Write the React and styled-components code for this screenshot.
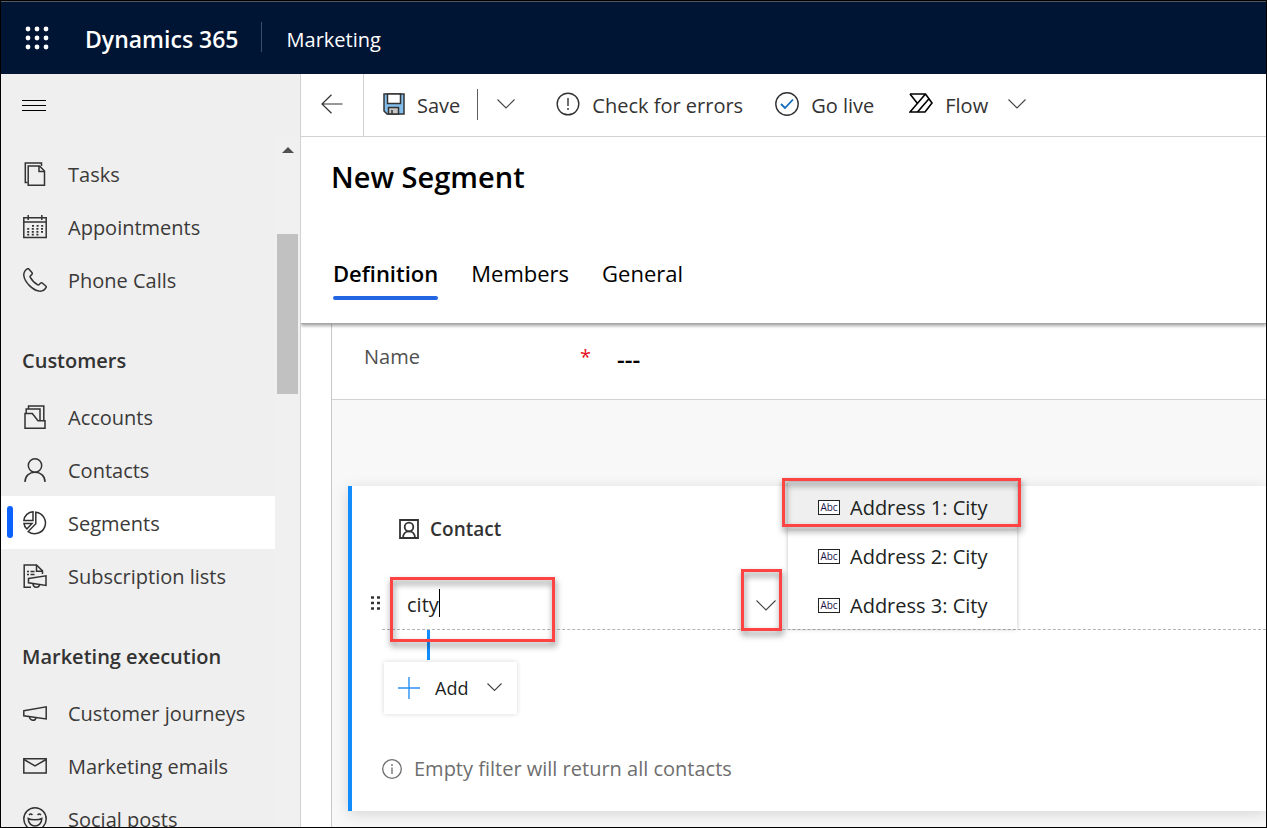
import React, { useState } from "react";
import styled, { createGlobalStyle, css } from "styled-components";

const GlobalStyle = createGlobalStyle`
  *, *::before, *::after { box-sizing: border-box; }
  body {
    margin: 0;
    background: #fff;
    color: #333;
    font-family: "Open Sans", "Noto Sans", sans-serif;
    font-size: 20px;
    line-height: 28px;
  }
  button, input { font: inherit; color: inherit; }
  button { background: none; border: 0; padding: 0; cursor: pointer; }
  a { color: inherit; text-decoration: none; }
  svg { display: block; flex: none; }
`;

const Shell = styled.div`
  display: flex;
  flex-direction: column;
  height: 100vh;
  overflow: hidden;
  border: 1px solid #000;
`;

const TopBar = styled.header`
  display: flex;
  align-items: center;
  flex: none;
  height: 73px;
  padding: 0 24px;
  border-top: 1px solid #55585f;
  background: #001433;
  color: #fff;
`;

const Brand = styled.a`
  margin-left: 36px;
  padding-top: 2px;
  font-size: 23px;
  font-weight: 600;
`;

const TopDivider = styled.span`
  width: 1px;
  height: 30px;
  margin: 0 25px 2px 22px;
  background: #3f4d66;
`;

const AppName = styled.span`
  padding-top: 3px;
`;

const Columns = styled.div`
  display: flex;
  flex: 1;
  min-height: 0;
`;

const Sidebar = styled.nav`
  display: flex;
  flex-direction: column;
  flex: none;
  width: 300px;
  border-right: 1px solid #d2d2d2;
  background: #efefef;
`;

const MenuToggle = styled.button`
  display: flex;
  align-items: center;
  flex: none;
  height: 63px;
  padding: 0 0 2px 21px;
`;

const SidebarBody = styled.div`
  display: flex;
  flex: 1;
  min-height: 0;
`;

const NavScroll = styled.div`
  flex: 1;
  overflow: hidden;
  padding-top: 10px;
`;

const NavHeading = styled.h2`
  margin: 0;
  padding: 41px 0 15px 21px;
  font-size: 20px;
  line-height: 28px;
  font-weight: 600;
`;

const NavList = styled.ul`
  margin: 0;
  padding: 0;
  list-style: none;
`;

const NavLink = styled.a`
  display: flex;
  align-items: center;
  position: relative;
  height: 53px;
  padding-left: 22px;
  gap: 21px;
  color: #3b3a39;
  ${(p) =>
    p.$active &&
    css`
      background: #fff;
      &::before {
        content: "";
        position: absolute;
        left: 6px;
        top: 10px;
        width: 6px;
        height: 32px;
        border-radius: 3px;
        background: #0b62ff;
      }
    `}
`;

const NavText = styled.span`
  padding-top: 3px;
`;

const ScrollTrack = styled.div`
  display: flex;
  flex-direction: column;
  align-items: center;
  flex: none;
  width: 25px;
  padding-top: 10px;
  background: #f0f0f0;
`;

const ScrollThumb = styled.div`
  width: 21px;
  height: 160px;
  margin-top: 81px;
  background: #c1c1c1;
`;

const Main = styled.main`
  display: flex;
  flex-direction: column;
  flex: 1;
  min-width: 0;
`;

const CommandBar = styled.div`
  display: flex;
  align-items: center;
  flex: none;
  height: 63px;
  border-bottom: 1px solid #d2d2d2;
`;

const BackButton = styled.button`
  display: flex;
  align-items: center;
  justify-content: center;
  width: 63px;
  height: 62px;
  margin-right: 19px;
  padding-bottom: 2px;
  border-right: 1px solid #d2d2d2;
`;

const Command = styled.button`
  display: flex;
  align-items: center;
  gap: 12px;
  margin-right: ${(p) => p.$after}px;
  padding-bottom: 2px;

  span { padding-top: 3px; }
`;

const CommandDivider = styled.span`
  width: 1px;
  height: 31px;
  margin: 0 19px 2px 0;
  background: #605e5c;
`;

const PageHead = styled.div`
  position: relative;
  z-index: 1;
  flex: none;
  height: 187px;
  padding: 21px 30px 0;
  border-bottom: 1px solid #a6a6a6;
  box-shadow: 0 2px 3px rgba(0, 0, 0, 0.35);
  clip-path: inset(0 0 -8px 0);
  background: #fff;
  color: #000;
`;

const PageTitle = styled.h1`
  margin: 0;
  font-size: 29px;
  line-height: 38px;
  font-weight: 600;
`;

const Tabs = styled.div`
  display: flex;
  gap: 33px;
  margin-top: 63px;
  padding-left: 2px;
`;

const Tab = styled.button`
  position: relative;
  height: 41px;
  padding-bottom: 13px;
  font-size: 22px;
  line-height: 28px;
  ${(p) =>
    p.$active &&
    css`
      font-weight: 600;
      &::after {
        content: "";
        position: absolute;
        left: 0;
        right: 0;
        bottom: 0;
        height: 4px;
        border-radius: 2px;
        background: #2266e3;
      }
    `}
`;

const FormPane = styled.div`
  display: flex;
  flex-direction: column;
  flex: 1;
  min-height: 0;
  margin-left: 30px;
  border-left: 1px solid #c8c8c8;
`;

const NameRow = styled.div`
  display: flex;
  align-items: center;
  flex: none;
  height: 76px;
  padding: 0 32px 10px;
  border-bottom: 1px solid #d2d2d2;
`;

const NameLabel = styled.label`
  width: 216px;
  color: #505050;
`;

const Required = styled.span`
  width: 37px;
  color: #e81123;
`;

const NameInput = styled.input`
  flex: 1;
  min-width: 0;
  padding: 4px 0 0;
  border: 0;
  outline: 0;
  color: #000;
  font-size: 24px;
  font-weight: 600;
`;

const Canvas = styled.div`
  flex: 1;
  min-height: 0;
  padding: 86px 0 16px 16px;
  background: #f8f8f8;
`;

const Card = styled.section`
  height: 325px;
  padding: 29px 0 0 19px;
  border-left: 4px solid #118dff;
  background: #fff;
  box-shadow: 0 3px 14px rgba(0, 0, 0, 0.14);
`;

const CardTitle = styled.h3`
  display: flex;
  align-items: center;
  gap: 11px;
  margin: 0 0 0 28px;
  font-size: 19px;
  line-height: 28px;
  font-weight: 600;
`;

const ConditionRow = styled.div`
  display: flex;
  align-items: center;
  margin-top: 37px;
`;

const DragHandle = styled.button`
  padding: 0 1px 4px 0;
  cursor: grab;
`;

const Field = styled.div`
  display: flex;
  align-items: center;
  flex: 1;
  position: relative;
  height: 50px;
  border-bottom: 1px dashed #b3b3b3;
`;

const FieldInput = styled.input`
  width: 359px;
  height: 48px;
  padding: 0 0 0 25px;
  border: 0;
  outline: 0;
  background: none;
  color: #252423;
`;

const Caret = styled.span`
  position: absolute;
  left: 57px;
  top: 9px;
  width: 1px;
  height: 28px;
  background: #000;
`;

const FieldToggle = styled.button`
  display: flex;
  align-items: center;
  justify-content: center;
  width: 49px;
  height: 48px;
`;

const Options = styled.ul`
  position: absolute;
  z-index: 2;
  left: 406px;
  bottom: 0;
  width: 229px;
  margin: 0;
  padding: 0;
  list-style: none;
  background: #fff;
  box-shadow: 0 0 4px rgba(0, 0, 0, 0.25);
`;

const Option = styled.li`
  display: flex;
  align-items: center;
  gap: 10px;
  height: 49px;
  padding: 2px 0 0 30px;
  color: #201f1e;
  background: ${(p) => (p.$active ? "#efefef" : "#fff")};
`;

const TypeBadge = styled.span`
  width: 22px;
  height: 15px;
  border: 1px solid #222;
  background: #fff;
  color: #1c1446;
  font-size: 10px;
  line-height: 13px;
  text-align: center;
`;

const Highlight = styled.span`
  position: absolute;
  z-index: 3;
  left: ${(p) => p.$left}px;
  top: ${(p) => p.$top}px;
  width: ${(p) => p.$width}px;
  height: ${(p) => p.$height}px;
  border: 3px solid #ff4343;
  filter: drop-shadow(1px 4px 3px rgba(0, 0, 0, 0.5));
  pointer-events: none;
`;

const Connector = styled.div`
  width: 3px;
  height: 30px;
  margin-left: 56px;
  background: #118dff;
`;

const AddButton = styled.button`
  display: flex;
  align-items: center;
  width: 133px;
  height: 52px;
  margin: 2px 0 0 13px;
  padding-left: 14px;
  background: #fff;
  box-shadow: 0 0 5px rgba(0, 0, 0, 0.16);
  color: #201f1e;
  font-size: 18px;

  span { margin: 0 19px 0 15px; }
`;

const Hint = styled.p`
  display: flex;
  align-items: center;
  gap: 12px;
  margin: 41px 0 0 11px;
  color: #6e6e6e;
`;

const Svg = ({ w = 24, h = 24, stroke = "#333", sw = 1.5, children }) => (
  <svg width={w} height={h} viewBox={`0 0 ${w} ${h}`} fill="none" stroke={stroke} strokeWidth={sw} aria-hidden="true">
    {children}
  </svg>
);

const Chevron = ({ w = 18, color = "#444" }) => (
  <Svg w={w} h={12} stroke={color} sw={1.1}>
    <path d={`M0.5 1.5 L${w / 2} ${w / 2 + 1} L${w - 0.5} 1.5`} />
  </Svg>
);

const icons = {
  tasks: (
    <Svg>
      <path d="M4.5 20.5H2.3V1H18.5V4" />
      <path d="M5.2 4H16.5L21.5 9V23.2H5.2Z" />
      <path d="M16 4V9.5H21.5" />
    </Svg>
  ),
  appointments: (
    <Svg>
      <path d="M0.8 2.8H23.2V22.5H0.8ZM0.8 7H23.2" />
      <path d="M5.2 0V5M18.8 0V5" />
      <path d="M9 10.8H20.5M4.2 13.8H20.5M4.2 16.8H20.5M4.2 19.6H16" strokeDasharray="2 2.6" strokeWidth="1.7" />
    </Svg>
  ),
  phone: (
    <Svg>
      <path d="M5.8 0.9L8.9 4.5C9.5 5.2 9.3 6 8.7 6.6L7.3 8C7 8.3 7 8.8 7.2 9.2C8.8 12.3 11.7 15.2 14.8 16.8C15.2 17 15.7 17 16 16.7L17.4 15.3C18.1 14.7 19 14.7 19.6 15.3L23 18.2C23.4 18.6 23.3 19.2 23 19.7C21.5 22.3 19.1 23.5 16.1 23.1C12.3 22.5 9.4 20.5 6.5 17.6C3.5 14.6 1.2 11.2 0.8 7.5C0.6 4.7 1.9 2.3 4.3 0.8C4.8 0.5 5.4 0.5 5.8 0.9Z" />
    </Svg>
  ),
  accounts: (
    <Svg>
      <path d="M2 8.5H9.3L15 15.8H22V23.2H2Z" />
      <path d="M3.2 8.5V4H17V15.5" />
      <path d="M5.5 4V0.9H20.8V15.5" />
    </Svg>
  ),
  contacts: (
    <Svg>
      <circle cx="12" cy="7.5" r="6.7" />
      <path d="M2 24C2 18 6.3 14.3 12 14.3C17.7 14.3 22 18 22 24" />
    </Svg>
  ),
  segments: (
    <Svg>
      <path d="M12.8 1.2A10.8 10.8 0 1 1 5.2 20.6L12.8 12.8Z" />
      <path d="M10 0.8V9.4H0.9A9.6 9.6 0 0 1 10 0.8Z" />
      <path d="M1 12.6H9L3.9 18C2.2 16.4 1.2 14.6 1 12.6Z" />
    </Svg>
  ),
  lists: (
    <Svg>
      <path d="M8 23.2H1.2V0.9H13.5L19.5 6.9V10" />
      <path d="M13.5 1V7.2H19.5" />
      <path d="M4 7.6H6M7.5 7.6H11.5M4 10.6H6M7.5 10.6H11.5" />
      <path d="M5.5 14.5L23 11.8V21.5L5.5 18.8Z" />
      <path d="M10 19.6C10.2 24.2 16 24.2 16.5 20.6" />
    </Svg>
  ),
  megaphone: (
    <Svg>
      <path d="M0.8 9.8L23.2 5.8V18L0.8 14.8Z" />
      <path d="M6.5 15.8C6.9 20 12.4 20.4 12.9 16.8" />
    </Svg>
  ),
  mail: (
    <Svg>
      <path d="M0.8 4.8H23.2V19H0.8Z" />
      <path d="M1 5.5L12 12L23 5.5" />
    </Svg>
  ),
  smile: (
    <Svg>
      <circle cx="12" cy="12" r="11.2" />
      <path d="M5.2 11.5C8 13.2 16 13.2 18.8 11.5C18.8 21.5 5.2 21.5 5.2 11.5Z" />
      <path d="M6 8Q7.8 6 9.4 8M14.6 8Q16.2 6 18 8" />
    </Svg>
  ),
};

const groups = [
  {
    items: [
      { icon: "tasks", label: "Tasks" },
      { icon: "appointments", label: "Appointments" },
      { icon: "phone", label: "Phone Calls" },
    ],
  },
  {
    title: "Customers",
    items: [
      { icon: "accounts", label: "Accounts" },
      { icon: "contacts", label: "Contacts" },
      { icon: "segments", label: "Segments", active: true },
      { icon: "lists", label: "Subscription lists" },
    ],
  },
  {
    title: "Marketing execution",
    items: [
      { icon: "megaphone", label: "Customer journeys" },
      { icon: "mail", label: "Marketing emails" },
      { icon: "smile", label: "Social posts" },
    ],
  },
];

const Waffle = () => (
  <svg width="24" height="24" viewBox="0 0 24 24" fill="#fff" aria-hidden="true">
    {[3, 12, 21].map((y) => [3, 12, 21].map((x) => <circle key={`${x}-${y}`} cx={x} cy={y} r="2.4" />))}
  </svg>
);

const SaveIcon = () => (
  <Svg w={22} h={22} stroke="#333" sw={1.5}>
    <path d="M1 1H21V21H4L1 18Z" fill="#83beec" />
    <path d="M4.5 1H17.5V10.5H4.5Z" fill="#fff" />
    <path d="M5.5 21V14.5H15.5V21Z" fill="#c8c6c4" />
    <path d="M9 17V21" />
  </Svg>
);

const FlowIcon = () => (
  <Svg w={24} h={22} stroke="#000" sw={1.6}>
    <path d="M1 1H16.5L23 10L16 19H1L16.5 1" />
    <path d="M1 1L8.5 10.5M8.5 19L20 5.8" />
  </Svg>
);

export default function App() {
  const [query, setQuery] = useState("city");
  const [name, setName] = useState("---");

  return (
    <>
      <GlobalStyle />
      <Shell>
        <TopBar>
          <Waffle />
          <Brand href="#home">Dynamics 365</Brand>
          <TopDivider />
          <AppName>Marketing</AppName>
        </TopBar>
        <Columns>
          <Sidebar aria-label="Site map">
            <MenuToggle aria-label="Toggle navigation">
              <Svg w={24} h={12} stroke="#000" sw={1}>
                <path d="M0 1.5H24M0 6.5H24M0 11.5H24" />
              </Svg>
            </MenuToggle>
            <SidebarBody>
              <NavScroll>
                {groups.map((group, i) => (
                  <React.Fragment key={i}>
                    {group.title && <NavHeading>{group.title}</NavHeading>}
                    <NavList>
                      {group.items.map((item) => (
                        <li key={item.label}>
                          <NavLink href="#nav" $active={item.active}>
                            {icons[item.icon]}
                            <NavText>{item.label}</NavText>
                          </NavLink>
                        </li>
                      ))}
                    </NavList>
                  </React.Fragment>
                ))}
              </NavScroll>
              <ScrollTrack>
                <svg width="12" height="6" viewBox="0 0 12 6" fill="#505050" aria-hidden="true">
                  <path d="M0 6L6 0L12 6Z" />
                </svg>
                <ScrollThumb />
              </ScrollTrack>
            </SidebarBody>
          </Sidebar>
          <Main>
            <CommandBar>
              <BackButton aria-label="Back">
                <Svg w={22} h={20} sw={1.2}>
                  <path d="M21.5 10H1M10.5 0.8L1 10L10.5 19.2" />
                </Svg>
              </BackButton>
              <Command $after={17}>
                <SaveIcon />
                <span>Save</span>
              </Command>
              <CommandDivider />
              <Command $after={41} aria-label="More save options">
                <Chevron />
              </Command>
              <Command $after={32}>
                <Svg sw={1.4}>
                  <circle cx="12" cy="12" r="10.8" />
                  <path d="M12 6V14M12 16V18" />
                </Svg>
                <span>Check for errors</span>
              </Command>
              <Command $after={35}>
                <Svg sw={1.4}>
                  <circle cx="12" cy="12" r="11.2" />
                  <path d="M6 12L10 16L18 7.5" stroke="#0f6cbd" strokeWidth="1.8" />
                </Svg>
                <span>Go live</span>
              </Command>
              <Command $after={20}>
                <FlowIcon />
                <span>Flow</span>
              </Command>
              <Command $after={0} aria-label="More flow options">
                <Chevron />
              </Command>
            </CommandBar>
            <PageHead>
              <PageTitle>New Segment</PageTitle>
              <Tabs role="tablist">
                <Tab role="tab" aria-selected="true" $active>Definition</Tab>
                <Tab role="tab" aria-selected="false">Members</Tab>
                <Tab role="tab" aria-selected="false">General</Tab>
              </Tabs>
            </PageHead>
            <FormPane>
              <NameRow>
                <NameLabel htmlFor="segment-name">Name</NameLabel>
                <Required aria-hidden="true">*</Required>
                <NameInput id="segment-name" value={name} onChange={(e) => setName(e.target.value)} />
              </NameRow>
              <Canvas>
                <Card>
                  <CardTitle>
                    <Svg w={20} h={20} sw={1.8}>
                      <path d="M1 1H19V19H1Z" />
                      <circle cx="10" cy="8" r="4.3" />
                      <path d="M4 19C4 15 6.5 12.3 10 12.3C13.5 12.3 16 15 16 19" />
                    </Svg>
                    Contact
                  </CardTitle>
                  <ConditionRow>
                    <DragHandle aria-label="Reorder condition">
                      <Svg w={10} h={14} sw={2.4}>
                        <path d="M0 1.5H3M6 1.5H9M0 7H3M6 7H9M0 12.5H3M6 12.5H9" />
                      </Svg>
                    </DragHandle>
                    <Field>
                      <FieldInput
                        aria-label="Attribute"
                        role="combobox"
                        aria-expanded="true"
                        aria-controls="attribute-options"
                        value={query}
                        onChange={(e) => setQuery(e.target.value)}
                      />
                      <Caret />
                      <FieldToggle aria-label="Show attributes">
                        <Chevron w={20} />
                      </FieldToggle>
                      <Options id="attribute-options" role="listbox">
                        {[1, 2, 3].map((n) => (
                          <Option key={n} role="option" aria-selected={n === 1} $active={n === 1}>
                            <TypeBadge>Abc</TypeBadge>
                            {`Address ${n}: City`}
                          </Option>
                        ))}
                      </Options>
                      <Highlight $left={8} $top={-3} $width={165} $height={65} />
                      <Highlight $left={359} $top={-11} $width={41} $height={62} />
                      <Highlight $left={400} $top={-102} $width={239} $height={49} />
                    </Field>
                  </ConditionRow>
                  <Connector />
                  <AddButton>
                    <Svg w={22} h={22} stroke="#2b90f5" sw={1.4}>
                      <path d="M0 11H22M11 0V22" />
                    </Svg>
                    <span>Add</span>
                    <Chevron w={15} />
                  </AddButton>
                  <Hint>
                    <Svg w={20} h={20} stroke="#6e6e6e" sw={1.3}>
                      <circle cx="10" cy="10" r="9.3" />
                      <path d="M10 8.5V15M10 5V7" />
                    </Svg>
                    Empty filter will return all contacts
                  </Hint>
                </Card>
              </Canvas>
            </FormPane>
          </Main>
        </Columns>
      </Shell>
    </>
  );
}
